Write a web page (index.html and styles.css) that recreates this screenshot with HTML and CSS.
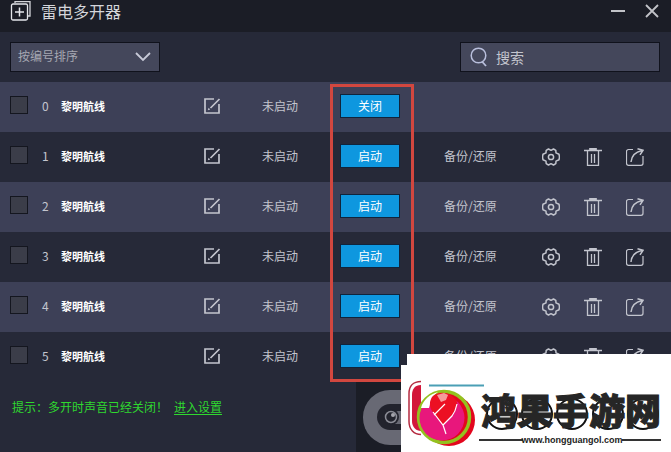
FILE: index.html
```
<!DOCTYPE html>
<html lang="zh-CN">
<head>
    <meta charset="utf-8">
    <title>雷电多开器</title>
    <link rel="stylesheet" href="styles.css">
</head>
<body>
    <!-- shared icons -->
    <svg class="icon-defs">
        <symbol id="icon-edit" viewBox="0 0 18 18">
            <path d="M11 2H2v14h14V7M7.500 11L16.500 2" fill="none" stroke="currentColor" stroke-width="1.700"/>
            <path d="M4.800 13.200l.8-2.400 1.600 1.600z" fill="currentColor"/>
        </symbol>
        <symbol id="icon-gear" viewBox="1 1 18 18">
            <path d="M7.500 2L10 3.300 12.500 2l2.300 1.300.2 2.600 3 1.300.5 2.800-.5 2.800-3 1.300-.2 2.600L12.500 18 10 16.700 7.500 18l-2.300-1.300-.2-2.600-3-1.300-.5-2.800.5-2.800 3-1.300.2-2.600z" fill="none" stroke="currentColor" stroke-width="1.500" stroke-linejoin="round"/>
            <circle cx="10" cy="10" r="2.600" fill="none" stroke="currentColor" stroke-width="1.500"/>
        </symbol>
        <symbol id="icon-trash" viewBox="1 1 18 18">
            <path d="M1 3.500h18M7 3V1.800h6V3" fill="none" stroke="currentColor" stroke-width="1.700"/>
            <path d="M4.500 4v14.300h11V4M8.500 7v9M11.500 7v9" fill="none" stroke="currentColor" stroke-width="1.300"/>
        </symbol>
        <symbol id="icon-share" viewBox="1 1 18 18">
            <path d="M8 2.500H3.500a2 2 0 0 0-2 2v11.800a2 2 0 0 0 2 2H16a2 2 0 0 0 2-2V9" fill="none" stroke="currentColor" stroke-width="1.200"/>
            <path d="M6 15C6.500 9 10 5 17 3.500M12.500 1.800l5.500 1.500-3 4.500" fill="none" stroke="currentColor" stroke-width="1.500"/>
        </symbol>
    </svg>

    <header class="titlebar">
        <svg class="logo" width="22" height="20" viewBox="0 1 22 20">
            <path d="M5 3V1.500h15V16h-2" fill="none" stroke="#d4d5da" stroke-width="1.300"/>
            <rect x="1.500" y="4" width="16" height="16" rx="1.500" fill="none" stroke="#e4e5ea" stroke-width="1.300"/>
            <path d="M5 12h9M9.500 7.500v9" stroke="#e4e5ea" stroke-width="1.500"/>
        </svg>
        <h1>雷电多开器</h1>
        <button class="win-btn" aria-label="最小化">
            <svg width="16" height="16" viewBox="0 0 16 16"><path d="M1 8h14" stroke="#c2c3c8" stroke-width="2"/></svg>
        </button>
        <button class="win-btn" aria-label="关闭窗口">
            <svg width="16" height="16" viewBox="0 0 16 16"><path d="M2 2l12 12M14 2L2 14" stroke="#c2c3c8" stroke-width="1.800"/></svg>
        </button>
    </header>

    <div class="toolbar">
        <div class="sort">
            <select aria-label="排序">
                <option>按编号排序</option>
            </select>
            <svg class="arrow" width="16" height="10" viewBox="0 0 16 10"><path d="M1 1l7 7 7-7" fill="none" stroke="#c8cad8" stroke-width="1.800"/></svg>
        </div>
        <label class="search">
            <svg width="18" height="20" viewBox="0 0 18 20">
                <circle cx="8.500" cy="8.500" r="7.300" fill="none" stroke="#b9bfdc" stroke-width="1.500"/>
                <path d="M12 14.500l4 4.500" stroke="#b9bfdc" stroke-width="1.800"/>
            </svg>
            <input type="text" placeholder="搜索" aria-label="搜索">
        </label>
    </div>

    <main class="list">
        <table>
            <colgroup>
                <col class="col-check"><col class="col-num"><col class="col-name"><col class="col-edit"><col class="col-status">
                <col class="col-run"><col class="col-backup"><col class="col-tool"><col class="col-tool"><col>
            </colgroup>
            <tbody>
                <tr>
                    <td><input type="checkbox" aria-label="选择 0"></td>
                    <td>0</td>
                    <td class="name">黎明航线</td>
                    <td><button class="icon-btn" aria-label="重命名"><svg><use href="#icon-edit"/></svg></button></td>
                    <td>未启动</td>
                    <td><button class="run">关闭</button></td>
                    <td></td>
                    <td></td>
                    <td></td>
                    <td></td>
                </tr>
                <tr>
                    <td><input type="checkbox" aria-label="选择 1"></td>
                    <td>1</td>
                    <td class="name">黎明航线</td>
                    <td><button class="icon-btn" aria-label="重命名"><svg><use href="#icon-edit"/></svg></button></td>
                    <td>未启动</td>
                    <td><button class="run">启动</button></td>
                    <td><a href="#">备份/还原</a></td>
                    <td class="tool"><button class="icon-btn" aria-label="设置"><svg><use href="#icon-gear"/></svg></button></td>
                    <td class="tool"><button class="icon-btn" aria-label="删除"><svg><use href="#icon-trash"/></svg></button></td>
                    <td class="tool"><button class="icon-btn" aria-label="分享"><svg><use href="#icon-share"/></svg></button></td>
                </tr>
                <tr>
                    <td><input type="checkbox" aria-label="选择 2"></td>
                    <td>2</td>
                    <td class="name">黎明航线</td>
                    <td><button class="icon-btn" aria-label="重命名"><svg><use href="#icon-edit"/></svg></button></td>
                    <td>未启动</td>
                    <td><button class="run">启动</button></td>
                    <td><a href="#">备份/还原</a></td>
                    <td class="tool"><button class="icon-btn" aria-label="设置"><svg><use href="#icon-gear"/></svg></button></td>
                    <td class="tool"><button class="icon-btn" aria-label="删除"><svg><use href="#icon-trash"/></svg></button></td>
                    <td class="tool"><button class="icon-btn" aria-label="分享"><svg><use href="#icon-share"/></svg></button></td>
                </tr>
                <tr>
                    <td><input type="checkbox" aria-label="选择 3"></td>
                    <td>3</td>
                    <td class="name">黎明航线</td>
                    <td><button class="icon-btn" aria-label="重命名"><svg><use href="#icon-edit"/></svg></button></td>
                    <td>未启动</td>
                    <td><button class="run">启动</button></td>
                    <td><a href="#">备份/还原</a></td>
                    <td class="tool"><button class="icon-btn" aria-label="设置"><svg><use href="#icon-gear"/></svg></button></td>
                    <td class="tool"><button class="icon-btn" aria-label="删除"><svg><use href="#icon-trash"/></svg></button></td>
                    <td class="tool"><button class="icon-btn" aria-label="分享"><svg><use href="#icon-share"/></svg></button></td>
                </tr>
                <tr>
                    <td><input type="checkbox" aria-label="选择 4"></td>
                    <td>4</td>
                    <td class="name">黎明航线</td>
                    <td><button class="icon-btn" aria-label="重命名"><svg><use href="#icon-edit"/></svg></button></td>
                    <td>未启动</td>
                    <td><button class="run">启动</button></td>
                    <td><a href="#">备份/还原</a></td>
                    <td class="tool"><button class="icon-btn" aria-label="设置"><svg><use href="#icon-gear"/></svg></button></td>
                    <td class="tool"><button class="icon-btn" aria-label="删除"><svg><use href="#icon-trash"/></svg></button></td>
                    <td class="tool"><button class="icon-btn" aria-label="分享"><svg><use href="#icon-share"/></svg></button></td>
                </tr>
                <tr>
                    <td><input type="checkbox" aria-label="选择 5"></td>
                    <td>5</td>
                    <td class="name">黎明航线</td>
                    <td><button class="icon-btn" aria-label="重命名"><svg><use href="#icon-edit"/></svg></button></td>
                    <td>未启动</td>
                    <td><button class="run">启动</button></td>
                    <td><a href="#">备份/还原</a></td>
                    <td class="tool"><button class="icon-btn" aria-label="设置"><svg><use href="#icon-gear"/></svg></button></td>
                    <td class="tool"><button class="icon-btn" aria-label="删除"><svg><use href="#icon-trash"/></svg></button></td>
                    <td class="tool"><button class="icon-btn" aria-label="分享"><svg><use href="#icon-share"/></svg></button></td>
                </tr>
            </tbody>
        </table>
        <div class="highlight"></div>
    </main>

    <footer class="footer">
        <p>提示：多开时声音已经关闭！</p>
        <a href="#">进入设置</a>
        <div class="camera">
            <svg width="90" height="70" viewBox="0 0 90 70">
                <rect x="7" y="8" width="100" height="55" rx="27" fill="#686974"/>
                <rect x="21" y="22" width="80" height="26" rx="13" fill="#22232d"/>
                <rect x="36" y="29" width="50" height="13" fill="#686974"/>
                <circle cx="35" cy="35" r="8" fill="#22232d"/>
                <circle cx="35" cy="35" r="5.500" fill="none" stroke="#8b8c96" stroke-width="1.500"/>
                <circle cx="37" cy="33" r="2" fill="#a4a5ad"/>
            </svg>
        </div>
    </footer>

    <!-- site mark over the corner -->
    <svg class="sitemark" width="270" height="98" viewBox="0 0 270 98">
        <path d="M6 0h264v98H0V11h6z" fill="#fff"/>
        <path d="M28 31.500h55" stroke="#4b9fb5" stroke-width="2"/>
        <path d="M20 27.500c-8 0-12 5-12 12v28c0 8 5 13 12 13" fill="none" stroke="#b52b40" stroke-width="1.500"/>
        <path d="M20 31c-6 0-9 4-9 10v26c0 6 4 10 9 10z" fill="#d3173a"/>
        <circle cx="48" cy="66" r="26" fill="#e3061d"/>
        <circle cx="43" cy="63" r="25.500" fill="#e3061d" stroke="#94c11f" stroke-width="3.500"/>
        <circle cx="41" cy="64" r="22.500" fill="#e8177c"/>
        <path d="M20 54c2-8 9-14 17-16l-6 5-3 11z" fill="#fff"/>
        <path d="M42 71L32 58c-5-5-4-15 3-18 8-3 17 0 21 8 1 8-8 16-14 23z" fill="#ec1023"/>
        <path d="M36 41l7-2 4 2-2 5-5 2z" fill="#f69b9b"/>
        <path d="M44 50L33 61M32 58l10 13 9-9c3-4 4-7 5-12M42 71l3 9" fill="none" stroke="#fff" stroke-width="1.200"/>
        <g class="rings">
            <circle cx="101" cy="60" r="15"/>
            <circle cx="136" cy="60" r="15"/>
            <circle cx="171" cy="60" r="15"/>
            <circle cx="207" cy="60" r="15"/>
            <circle cx="242" cy="60" r="15"/>
        </g>
        <text class="site-name" x="80" y="71">鸿果手游网</text>
        <path d="M78 86h44M221 86h39" stroke="#333" stroke-width="2"/>
        <text class="site-url" x="171" y="89">www.hongguangol.com</text>
    </svg>
</body>
</html>
```
FILE: styles.css
```
* {
    box-sizing: border-box;
}

body {
    position: relative;
    display: flex;
    flex-direction: column;
    min-height: 100vh;
    margin: 0;
    background: #262938;
    color: #c3c5ce;
    font-family: "Noto Sans CJK SC", sans-serif;
    font-size: 12px;
    line-height: 18px;
}

button {
    border: none;
    padding: 0;
    background: none;
    color: inherit;
    font: inherit;
    cursor: pointer;
}

svg {
    display: block;
}

.icon-defs {
    position: absolute;
    width: 0;
    height: 0;
}

/* Title bar */
.titlebar {
    display: flex;
    align-items: center;
    height: 32px;
    padding: 0 11px 10px 10px;
    background: #1b1d26;
}

.titlebar h1 {
    flex: 1;
    margin: 0 0 0 9px;
    color: #d4d5da;
    font-size: 16px;
    font-weight: normal;
    line-height: 22px;
}

.win-btn {
    margin-left: 18px;
}

/* Sort and search */
.toolbar {
    display: flex;
    align-items: center;
    justify-content: space-between;
    height: 50px;
    padding: 0 11px 0 10px;
}

.sort {
    position: relative;
    width: 150px;
}

.sort select {
    display: block;
    appearance: none;
    width: 100%;
    height: 30px;
    padding: 0 7px 2px;
    border: 1px solid #10121c;
    border-radius: 0;
    background: #44475b;
    color: #a6a8b2;
    font: inherit;
}

.sort .arrow {
    position: absolute;
    top: 10px;
    right: 9px;
    pointer-events: none;
}

.search {
    display: flex;
    align-items: center;
    gap: 8px;
    width: 200px;
    height: 30px;
    padding: 0 9px;
    border: 1px solid #10121c;
    background: #44475b;
}

.search input {
    flex: 1;
    min-width: 0;
    padding: 0;
    border: none;
    outline: none;
    background: none;
    color: #c3c5ce;
    font: inherit;
    font-size: 14px;
}

.search input::placeholder {
    color: #c3c5ce;
}

/* Instance list */
.list {
    position: relative;
}

table {
    width: 100%;
    table-layout: fixed;
    border-collapse: collapse;
}

.col-check { width: 42px; }
.col-num { width: 19px; }
.col-name { width: 142px; }
.col-edit { width: 59px; }
.col-status { width: 78px; }
.col-run { width: 104px; }
.col-backup { width: 98px; }
.col-tool { width: 42px; }

tr {
    height: 50px;
}

tr:nth-child(odd) {
    background: #3d4057;
}

td {
    padding: 0 0 2px;
    vertical-align: middle;
    white-space: nowrap;
}

td:first-child {
    padding: 0 0 4px 10px;
}

td.tool {
    padding: 0;
}

td.name {
    color: #fff;
    font-size: 11px;
    font-weight: bold;
}

td a {
    color: inherit;
    text-decoration: none;
}

input[type="checkbox"] {
    display: block;
    appearance: none;
    width: 18px;
    height: 18px;
    margin: 0;
    border: 1px solid #14161f;
    background: #3b3d49;
}

input[type="checkbox"]:checked {
    background: #0e97df;
}

.icon-btn {
    display: block;
}

.icon-btn svg {
    width: 18px;
    height: 18px;
}

.run {
    display: block;
    width: 60px;
    height: 24px;
    border: 1px solid #10243c;
    background: #0e97df;
    color: #fff;
    line-height: 20px;
}

.highlight {
    position: absolute;
    top: 2px;
    bottom: 0;
    left: 330px;
    width: 84px;
    border: 3px solid #d2473f;
    pointer-events: none;
}

/* Footer */
.footer {
    display: flex;
    flex: 1;
    min-height: 70px;
    padding-left: 12px;
    color: #2fd82f;
}

.footer p {
    margin: 0;
    padding-top: 16px;
}

.footer a {
    width: 182px;
    margin-left: 6px;
    padding-top: 16px;
    color: inherit;
    text-underline-offset: 2px;
}

.camera {
    flex: 1;
    background: #1b1d26;
}

/* Site mark */
.sitemark {
    position: absolute;
    right: 0;
    bottom: 0;
}

.rings {
    fill: none;
    stroke: #111;
    stroke-width: 2;
}

.site-name {
    fill: #262626;
    stroke: #262626;
    stroke-width: 1;
    font-size: 36px;
    font-weight: 900;
}

.site-url {
    fill: #222;
    font-family: "Liberation Sans", sans-serif;
    font-size: 9px;
    font-weight: bold;
    text-anchor: middle;
}
```
